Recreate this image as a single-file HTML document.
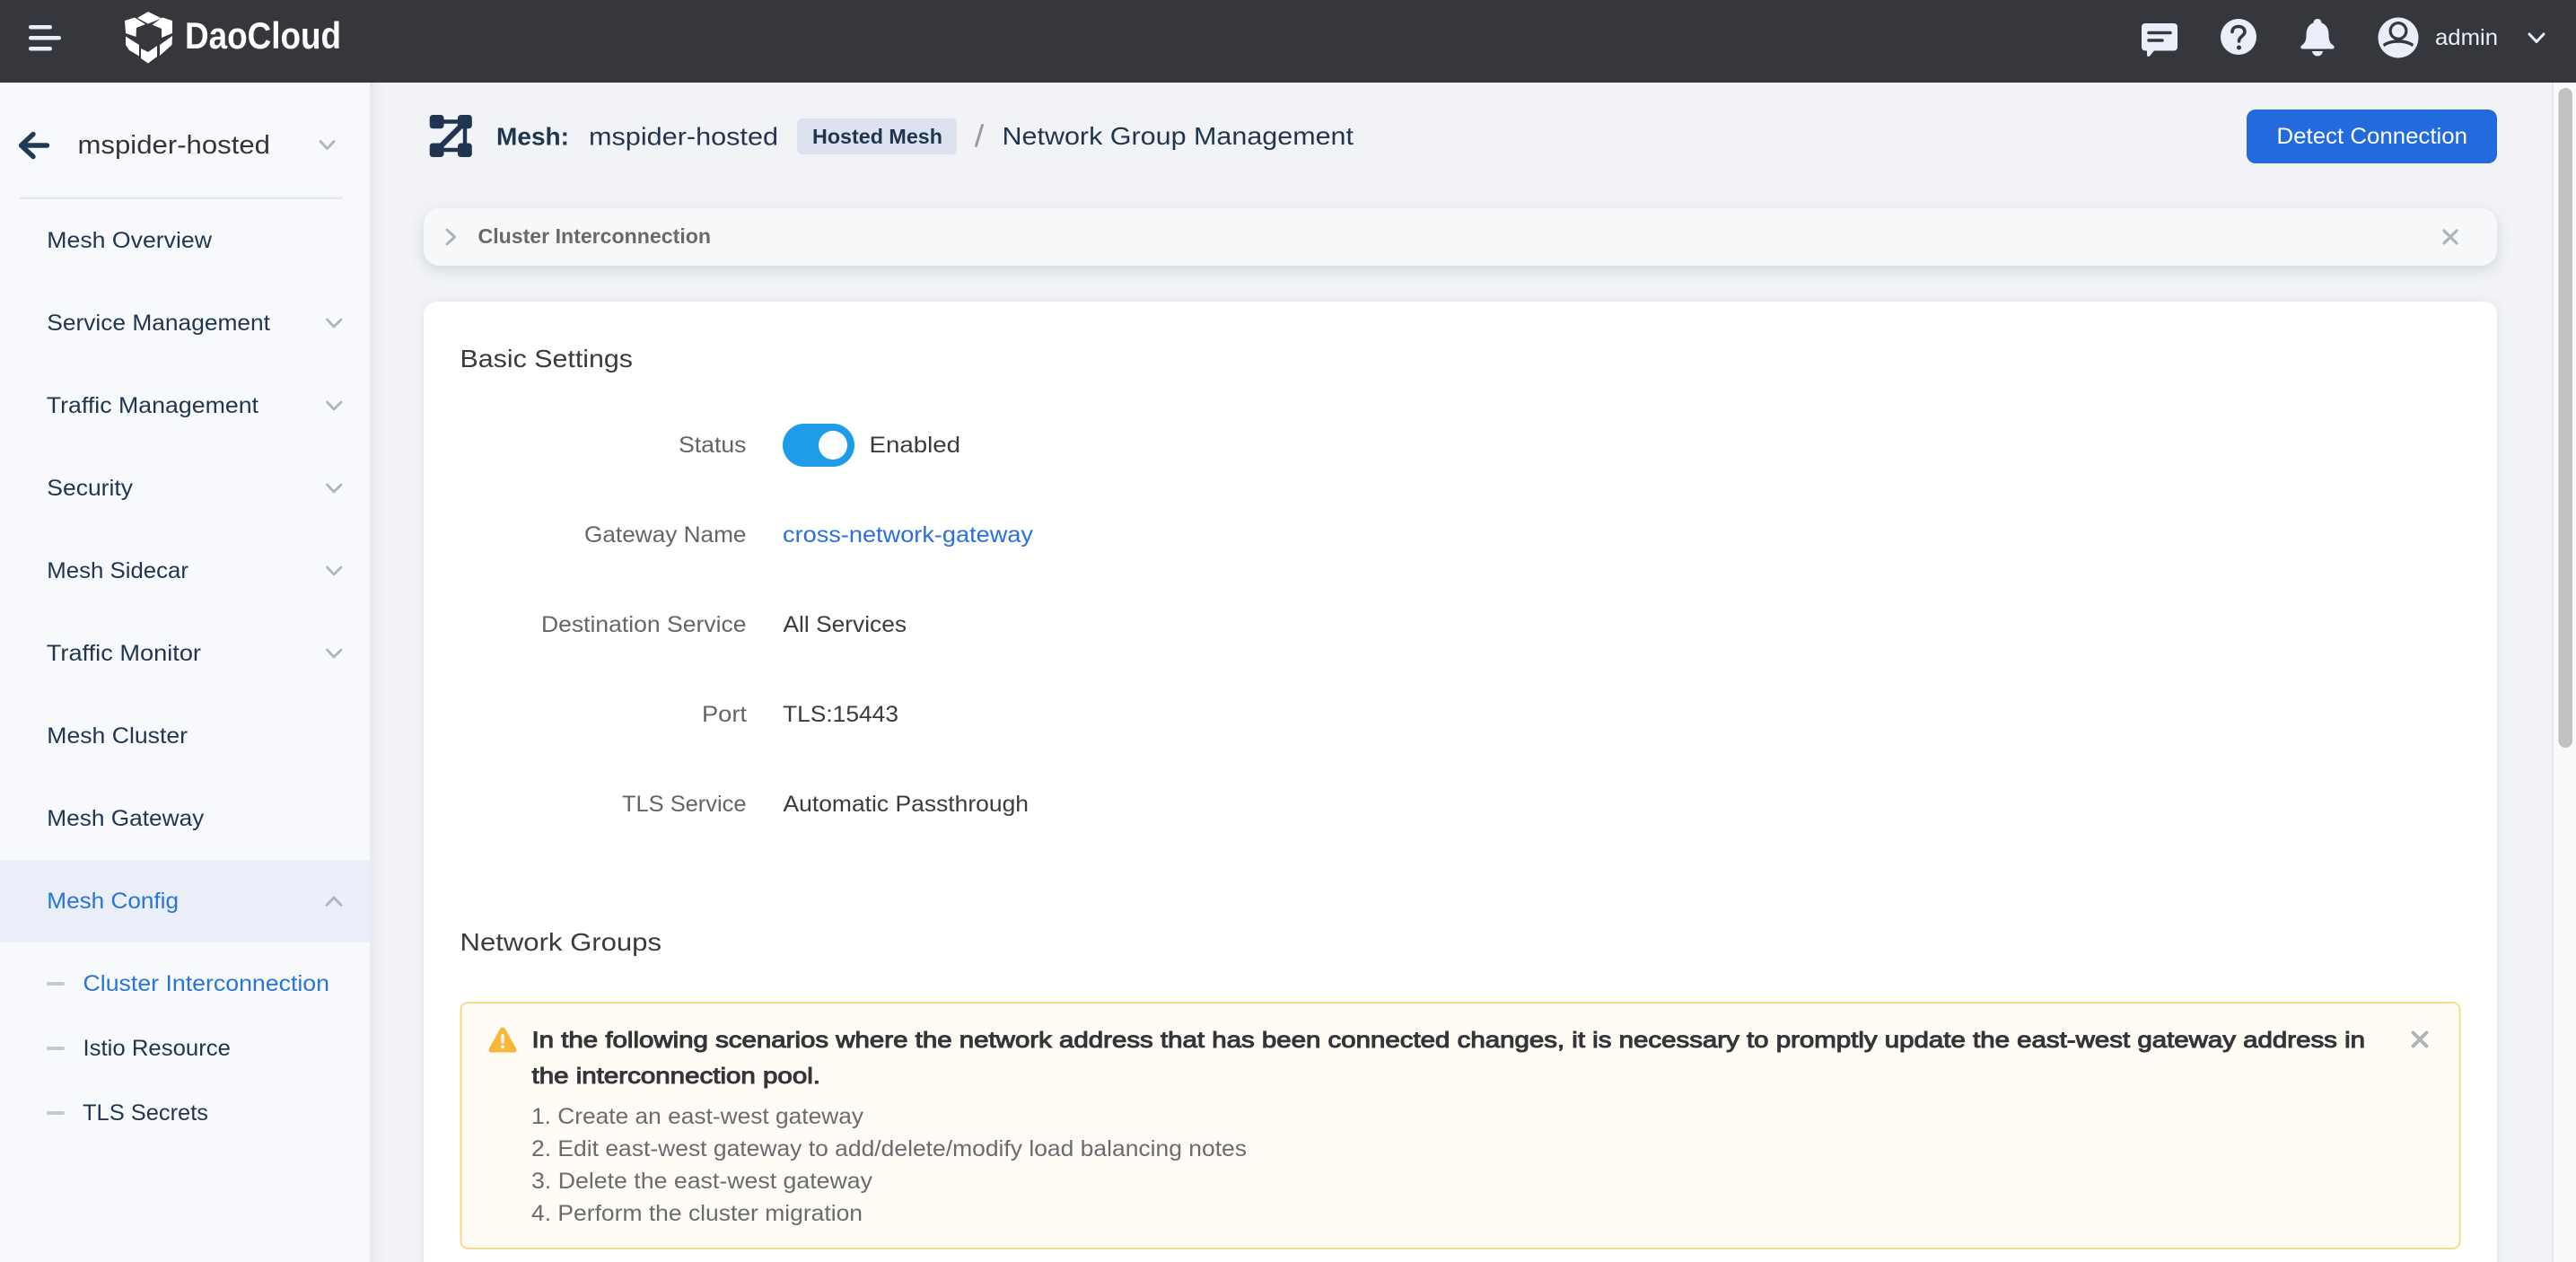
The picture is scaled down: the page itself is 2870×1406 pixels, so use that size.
<!DOCTYPE html>
<html lang="en"><head><meta charset="utf-8"><title>Network Group Management</title>
<style>
html,body{margin:0;padding:0;width:2870px;height:1406px;overflow:hidden;background:#f1f3f7}
svg{display:block}
text{font-family:"Liberation Sans",sans-serif;font-size:24.6px;white-space:pre}
.nav{fill:#1f3550}
.act{fill:#2874d9}
.lab{fill:#636569}
.val{fill:#3a3b3e}
.h2{fill:#3a3b3e;font-size:28px}
.li{fill:#6a6b6e;font-size:24.6px}
.chev{fill:none;stroke:#b0b5bd;stroke-width:2.8;stroke-linecap:round;stroke-linejoin:round}
.semi{stroke-width:1;font-size:25px}
</style></head><body>
<svg xmlns="http://www.w3.org/2000/svg" width="2870" height="1406" viewBox="0 0 2870 1406">
<defs>
<linearGradient id="sb" x1="0" x2="1" y1="0" y2="0"><stop offset="0" stop-color="#e7e8ed"/><stop offset="1" stop-color="#f1f3f7"/></linearGradient>
<clipPath id="av"><circle cx="2672" cy="42" r="18.5"/></clipPath>
</defs>
<rect width="2870" height="1406" fill="#f1f3f7"/>

<!-- scrollbar -->
<rect x="2844" y="92" width="26" height="1314" fill="#fafafa"/>
<rect x="2843" y="92" width="2" height="1314" fill="#e9e9ec"/>
<rect x="2850.5" y="98" width="15.5" height="735" rx="7.7" fill="#c1c1c1"/>

<!-- sidebar -->
<rect x="412" y="92" width="16" height="1314" fill="url(#sb)"/>
<rect x="0" y="92" width="412" height="1314" fill="#f7f9fd"/>
<path d="M52.500 162H23.500M37 149.500L23.500 162L37 174.500" fill="none" stroke="#1f3a56" stroke-width="5.400" stroke-linecap="round" stroke-linejoin="round"/>
<text x="86.500" y="171" textLength="214.500" lengthAdjust="spacingAndGlyphs" style="font-size:29px" fill="#333539">mspider-hosted</text>
<path class="chev" d="M357 157.500L364.500 165.500L372 157.500"/>
<rect x="22" y="219.500" width="360" height="2.500" fill="#e6e8f0"/>

<text class="nav" x="52.300" y="276" textLength="183.700" lengthAdjust="spacingAndGlyphs">Mesh Overview</text>
<text class="nav" x="52.300" y="368" textLength="248.700" lengthAdjust="spacingAndGlyphs">Service Management</text>
<text class="nav" x="51.800" y="460" textLength="236.200" lengthAdjust="spacingAndGlyphs">Traffic Management</text>
<text class="nav" x="52.300" y="552" textLength="95.700" lengthAdjust="spacingAndGlyphs">Security</text>
<text class="nav" x="52.300" y="644" textLength="157.700" lengthAdjust="spacingAndGlyphs">Mesh Sidecar</text>
<text class="nav" x="51.800" y="736" textLength="172.200" lengthAdjust="spacingAndGlyphs">Traffic Monitor</text>
<text class="nav" x="52.300" y="828" textLength="156.700" lengthAdjust="spacingAndGlyphs">Mesh Cluster</text>
<text class="nav" x="52.300" y="920" textLength="175" lengthAdjust="spacingAndGlyphs">Mesh Gateway</text>
<path class="chev" d="M364.500 356L372 364L380 356"/>
<path class="chev" d="M364.500 448L372 456L380 448"/>
<path class="chev" d="M364.500 540L372 548L380 540"/>
<path class="chev" d="M364.500 632L372 640L380 632"/>
<path class="chev" d="M364.500 724L372 732L380 724"/>

<rect x="0" y="958" width="412" height="92" fill="#e9eef8"/>
<text class="act" x="52.300" y="1012" textLength="146.700" lengthAdjust="spacingAndGlyphs">Mesh Config</text>
<path class="chev" d="M364 1008.500L372 1000L380 1008.500"/>

<rect x="52" y="1094" width="20" height="4" rx="2" fill="#c5cad3"/>
<rect x="52" y="1166" width="20" height="4" rx="2" fill="#c5cad3"/>
<rect x="52" y="1238" width="20" height="4" rx="2" fill="#c5cad3"/>
<text class="act" x="92.500" y="1104" textLength="274.500" lengthAdjust="spacingAndGlyphs">Cluster Interconnection</text>
<text class="nav" x="92.500" y="1176" textLength="164.500" lengthAdjust="spacingAndGlyphs">Istio Resource</text>
<text class="nav" x="92" y="1248" textLength="140" lengthAdjust="spacingAndGlyphs">TLS Secrets</text>

<!-- page header -->
<g fill="#1f3550">
<rect x="478.700" y="128" width="15.800" height="15.300" rx="3.500"/>
<rect x="510" y="128" width="15.800" height="15.300" rx="3.500"/>
<rect x="478.700" y="159.500" width="15.800" height="15.500" rx="3.500"/>
<rect x="510" y="159.500" width="15.800" height="15.500" rx="3.500"/>
</g>
<path d="M490 135.500H515M490 167H515M518 140V162" fill="none" stroke="#1f3550" stroke-width="4.400"/>
<path d="M490 164L515 139" fill="none" stroke="#1f3550" stroke-width="6"/>
<text x="553" y="161.500" textLength="81" lengthAdjust="spacingAndGlyphs" style="font-size:28px;font-weight:700" fill="#1f3550">Mesh:</text>
<text x="656" y="161.500" textLength="211" lengthAdjust="spacingAndGlyphs" style="font-size:28px" fill="#1f3550">mspider-hosted</text>
<rect x="888" y="132" width="178" height="40" rx="6" fill="#dce2ee"/>
<text x="905" y="160" textLength="145" lengthAdjust="spacingAndGlyphs" style="font-size:23px;font-weight:700" fill="#1f3550">Hosted Mesh</text>
<path d="M1094.500 139.500L1087.500 162.500" stroke="#9a9a9a" stroke-width="3" stroke-linecap="round"/>
<text x="1116.500" y="161" textLength="391.500" lengthAdjust="spacingAndGlyphs" style="font-size:28px" fill="#1f3550">Network Group Management</text>
<rect x="2503" y="122" width="279" height="60" rx="10" fill="#236bdd"/>
<text x="2536.500" y="160" textLength="212.500" lengthAdjust="spacingAndGlyphs" fill="#ffffff">Detect Connection</text>

<!-- collapse bar -->
<rect x="472" y="232" width="2310" height="64" rx="18" fill="#f7f8fa" style="filter:drop-shadow(0 5px 8px rgba(30,40,60,.14))"/>
<path d="M498 256L506.500 264L498 272" fill="none" stroke="#a9aeb7" stroke-width="2.800" stroke-linecap="round" stroke-linejoin="round"/>
<text x="532.500" y="271" textLength="259.500" lengthAdjust="spacingAndGlyphs" style="font-size:23.500px;font-weight:700" fill="#69696b">Cluster Interconnection</text>
<path d="M2723 257L2737 271M2737 257L2723 271" stroke="#aeb4bc" stroke-width="3.200" stroke-linecap="round"/>

<!-- card -->
<rect x="472" y="336" width="2310" height="1120" rx="14" fill="#ffffff" style="filter:drop-shadow(0 0 5px rgba(30,40,60,.08))"/>
<text class="h2" x="512.500" y="409" textLength="192.500" lengthAdjust="spacingAndGlyphs">Basic Settings</text>

<text class="lab" x="756" y="504" textLength="75.500" lengthAdjust="spacingAndGlyphs">Status</text>
<rect x="872" y="472" width="80" height="48" rx="24" fill="#1e9ce8"/>
<circle cx="928" cy="496" r="16" fill="#ffffff"/>
<text class="val" x="968.500" y="504" textLength="101.500" lengthAdjust="spacingAndGlyphs">Enabled</text>

<text class="lab" x="651" y="604" textLength="180.500" lengthAdjust="spacingAndGlyphs">Gateway Name</text>
<text x="872" y="604" textLength="279" lengthAdjust="spacingAndGlyphs" fill="#2a6fdc">cross-network-gateway</text>

<text class="lab" x="603" y="704" textLength="228.500" lengthAdjust="spacingAndGlyphs">Destination Service</text>
<text class="val" x="872.500" y="704" textLength="137.500" lengthAdjust="spacingAndGlyphs">All Services</text>

<text class="lab" x="782" y="804" textLength="50" lengthAdjust="spacingAndGlyphs">Port</text>
<text class="val" x="872" y="804" textLength="129" lengthAdjust="spacingAndGlyphs">TLS:15443</text>

<text class="lab" x="693" y="904" textLength="138.500" lengthAdjust="spacingAndGlyphs">TLS Service</text>
<text class="val" x="872.500" y="904" textLength="273.500" lengthAdjust="spacingAndGlyphs">Automatic Passthrough</text>

<text class="h2" x="512.500" y="1059" textLength="224.500" lengthAdjust="spacingAndGlyphs">Network Groups</text>

<!-- alert -->
<rect x="513.500" y="1117" width="2227" height="274" rx="8" fill="#fffcf5" stroke="#f8d88e" stroke-width="2"/>
<path d="M560 1144.500C561.500 1144.500 562.500 1145.300 563.300 1147L575 1168C576.300 1170.300 575 1172.500 572.500 1172.500H547.500C545 1172.500 543.700 1170.300 545 1168L556.700 1147C557.500 1145.300 558.500 1144.500 560 1144.500Z" fill="#f6b73c"/>
<rect x="558.300" y="1152" width="3.400" height="10.500" rx="1.700" fill="#fffcf5"/>
<circle cx="560" cy="1166.500" r="2" fill="#fffcf5"/>
<text class="semi" x="592.500" y="1167" textLength="2042.500" lengthAdjust="spacingAndGlyphs" fill="#343538" stroke="#343538">In the following scenarios where the network address that has been connected changes, it is necessary to promptly update the east-west gateway address in</text>
<text class="semi" x="592.500" y="1207" textLength="321.500" lengthAdjust="spacingAndGlyphs" fill="#343538" stroke="#343538">the interconnection pool.</text>
<path d="M2688.500 1150.500L2703.500 1165.500M2703.500 1150.500L2688.500 1165.500" stroke="#aeb4bc" stroke-width="3.800" stroke-linecap="round"/>
<text class="li" x="592" y="1252" textLength="370" lengthAdjust="spacingAndGlyphs">1. Create an east-west gateway</text>
<text class="li" x="592" y="1288" textLength="797" lengthAdjust="spacingAndGlyphs">2. Edit east-west gateway to add/delete/modify load balancing notes</text>
<text class="li" x="592" y="1324" textLength="380" lengthAdjust="spacingAndGlyphs">3. Delete the east-west gateway</text>
<text class="li" x="592" y="1360" textLength="369" lengthAdjust="spacingAndGlyphs">4. Perform the cluster migration</text>

<!-- top bar -->
<rect x="0" y="0" width="2870" height="92" fill="#36373d"/>
<g fill="#e9eef8">
<rect x="32" y="28" width="26" height="4.500" rx="2.200"/>
<rect x="32" y="40" width="36" height="4.500" rx="2.200"/>
<rect x="32" y="52" width="26" height="4.500" rx="2.200"/>
</g>
<g fill="#ffffff">
<path d="M165 13L180 20.500L165 26.500L153 20Z"/>
<path d="M139 23L150 19.500L162 27L152 31L151.500 41L140 37Z"/>
<path d="M140 40.500L155 50V62.500L144 56L140 50Z"/>
<path d="M157 54L165 58L175 51V63L165 70.500L157 65Z"/>
<path d="M192 23L181 19.500L169.500 27.500L180 32V42L192 37Z"/>
<path d="M192 40L191.500 50L178 62V50Z"/>
</g>
<text x="206" y="54" textLength="174" lengthAdjust="spacingAndGlyphs" style="font-size:42px;font-weight:700" fill="#ffffff">DaoCloud</text>

<!-- comment -->
<rect x="2386" y="26" width="40" height="30.500" rx="4" fill="#e9eef8"/>
<path d="M2392 54V61.500C2392 63 2394 63.500 2395 62.500L2402 54Z" fill="#e9eef8"/>
<path d="M2394 36.500H2418M2394 45H2409" stroke="#36373d" stroke-width="3.500" stroke-linecap="round"/>
<!-- help -->
<circle cx="2494" cy="41" r="20" fill="#e9eef8"/>
<path d="M2487 35.500C2487 31.500 2490.200 29.500 2494 29.500C2498 29.500 2501 31.800 2501 35.300C2501 40 2494.500 40.500 2494.500 46" fill="none" stroke="#36373d" stroke-width="3.600" stroke-linecap="round"/>
<circle cx="2494.500" cy="53" r="2.500" fill="#36373d"/>
<!-- bell -->
<path d="M2582 21C2585 21 2586.500 23 2586.500 25.500C2592.500 27.500 2594.500 33 2594.500 39C2594.500 45 2596 48 2599.500 50.500C2601.500 52 2600.800 54.500 2598.500 54.500H2565.500C2563.200 54.500 2562.500 52 2564.500 50.500C2568 48 2569.500 45 2569.500 39C2569.500 33 2571.500 27.500 2577.500 25.500C2577.500 23 2579 21 2582 21Z" fill="#e9eef8"/>
<path d="M2576 57H2588C2587.500 60.500 2585 62.500 2582 62.500C2579 62.500 2576.500 60.500 2576 57Z" fill="#e9eef8"/>
<!-- avatar -->
<circle cx="2672" cy="42" r="22.500" fill="#e9eef8"/>
<circle cx="2672" cy="34.500" r="10.500" fill="#36373d"/>
<circle cx="2672" cy="34.500" r="7.200" fill="#e9eef8"/>
<g clip-path="url(#av)"><ellipse cx="2672" cy="55.500" rx="19" ry="9.500" fill="#e9eef8" stroke="#36373d" stroke-width="3.400"/></g>
<text x="2713" y="50" textLength="70" lengthAdjust="spacingAndGlyphs" fill="#e9eef8">admin</text>
<path d="M2818 38L2826 46.500L2834 38" fill="none" stroke="#e9eef8" stroke-width="3" stroke-linecap="round" stroke-linejoin="round"/>
</svg>
</body></html>
